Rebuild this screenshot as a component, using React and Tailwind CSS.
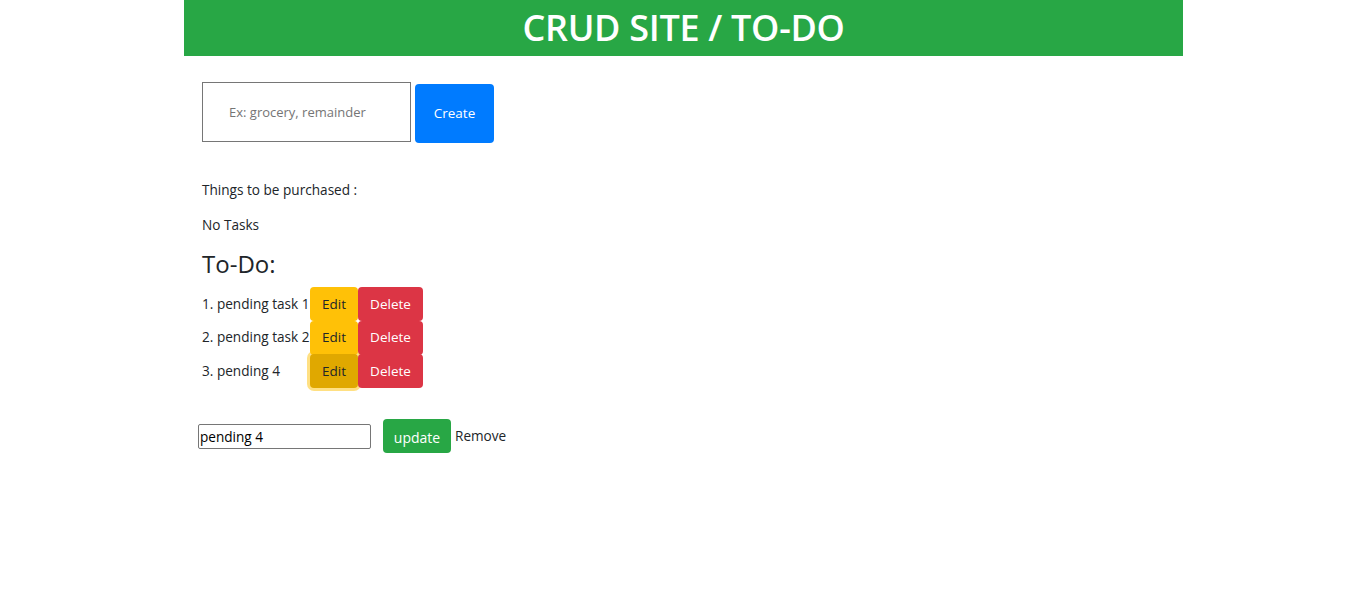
export default function App() {
  const tasks = ["pending task 1", "pending task 2", "pending 4"];
  return (
    <div className="min-h-[616px] bg-white text-[#212529] text-[14px]" style={{ fontFamily: '"Open Sans", "Noto Sans", sans-serif' }}>
      <div className="w-[999px] ml-[184px]">
        <header className="h-[56px] bg-[#28a745] flex items-center justify-center">
          <h1 className="text-[36px] font-semibold text-white leading-none tracking-[-0.3px]">CRUD SITE / TO-DO</h1>
        </header>
        <div className="pl-[18px]">
          <div className="flex items-start mt-[26px] gap-[4px]">
            <input
              className="w-[209px] h-[60px] border border-[#767676] px-[26px] text-[13px] outline-none placeholder:text-[#757575]"
              placeholder="Ex: grocery, remainder"
            />
            <button className="mt-[2px] w-[79px] h-[59px] bg-[#007bff] rounded-[4px] text-white text-[13.5px]">Create</button>
          </div>
          <p className="mt-[37px] leading-[20px] text-[13.6px]">Things to be purchased :</p>
          <p className="mt-[15px] leading-[20px] text-[13.6px]">No Tasks</p>
          <h2 className="mt-[14px] text-[24px] font-medium leading-[30px]">To-Do:</h2>
          <div className="mt-[8px] flex flex-col">
            {tasks.map((t, i) => (
              <div key={i} className="flex items-center h-[33.7px]">
                <span className="w-[108px] text-[13.6px] whitespace-nowrap">{i + 1}. {t}</span>
                <button
                  className={
                    "w-[48px] h-[34px] rounded-[4px] text-[13.5px] text-[#212529] " +
                    (i === 2 ? "bg-[#e0a800] ring-[3px] ring-[#ffc107]/50" : "bg-[#ffc107]")
                  }
                >
                  Edit
                </button>
                <button className="w-[65px] h-[34px] rounded-[4px] bg-[#dc3545] text-white text-[13.5px]">Delete</button>
              </div>
            ))}
          </div>
          <div className="flex items-center mt-[31px] -ml-[4px]">
            <input
              className="w-[173px] h-[25px] border border-[#767676] rounded-[2px] px-[1px] text-[13.6px] text-black outline-none"
              defaultValue="pending 4"
            />
            <button className="ml-[12px] w-[68px] h-[34px] bg-[#28a745] rounded-[4px] text-white text-[14px] pt-[2px]">update</button>
            <span className="ml-[4px] text-[13.6px]">Remove</span>
          </div>
        </div>
      </div>
    </div>
  );
}
